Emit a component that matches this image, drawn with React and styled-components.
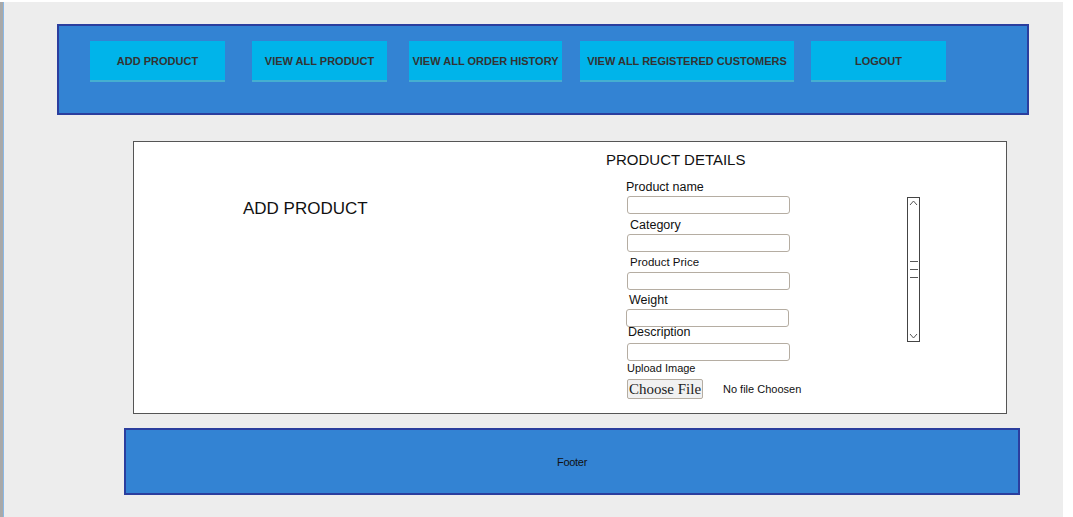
import React from 'react';
import styled, { createGlobalStyle } from 'styled-components';

const GlobalStyle = createGlobalStyle`
  html, body {
    margin: 0;
    padding: 0;
    background: #ffffff;
    font-family: "Liberation Sans", Arial, sans-serif;
  }
`;

const Canvas = styled.div`
  width: 1060px;
  height: 515px;
  margin-top: 2px;
  background: #ededed;
  border-left: 3px solid #a9a9a9;
  box-shadow: inset 1px 0 0 #8ab8e6;
  display: flex;
  flex-direction: column;
  align-items: flex-start;
`;

const Header = styled.header`
  box-sizing: border-box;
  width: 972px;
  height: 91px;
  margin: 22px 0 0 54px;
  background: #3383d3;
  border: 2px solid #2b3e9e;
  padding: 15px 0 0 31px;
  display: flex;
  align-items: flex-start;
`;

const NavButton = styled.button`
  box-sizing: border-box;
  width: ${p => p.$width}px;
  height: 41px;
  margin-left: ${p => p.$offset || 0}px;
  padding: 1px 0 0;
  background: #00b4ea;
  border: none;
  border-bottom: 2px solid #45afd0;
  color: #333;
  font-family: "Liberation Sans", Arial, sans-serif;
  font-weight: 700;
  font-size: 11px;
  white-space: nowrap;
  cursor: pointer;
`;

const Card = styled.main`
  box-sizing: border-box;
  width: 874px;
  height: 273px;
  margin: 26px 0 0 130px;
  background: #fff;
  border: 1px solid #555;
  display: flex;
`;

const LeftCol = styled.section`
  width: 472px;
  padding: 57px 0 0 109px;
  box-sizing: border-box;
`;

const Title = styled.h1`
  margin: 0;
  font-size: 17px;
  font-weight: 400;
  color: #111;
  line-height: 20px;
`;

const FormCol = styled.form`
  width: 301px;
  padding-top: 9px;
  box-sizing: border-box;
  display: flex;
  flex-direction: column;
  align-items: flex-start;
`;

const Heading = styled.h2`
  margin: 0;
  font-size: 15px;
  font-weight: 400;
  color: #111;
  line-height: 18px;
`;

const Field = styled.div`
  display: flex;
  flex-direction: column;
  align-items: flex-start;
  margin-top: ${p => p.$top}px;
`;

const Label = styled.label`
  margin-left: ${p => p.$indent}px;
  font-size: ${p => p.$size || 12.5}px;
  line-height: 15px;
  color: #111;
`;

const Input = styled.input`
  box-sizing: border-box;
  width: 163px;
  height: 18px;
  margin: ${p => p.$gap}px 0 0 ${p => p.$indent || 21}px;
  border: 1px solid #b5ada2;
  border-radius: 3px;
  background: #fff;
  outline: none;
`;

const FileRow = styled.div`
  display: flex;
  align-items: center;
  margin: 3px 0 0 21px;
`;

const FileButton = styled.button`
  box-sizing: border-box;
  width: 76px;
  height: 20px;
  padding: 0;
  background: #f1f1f1;
  border: 1px solid #b5ada2;
  border-radius: 2px;
  font-family: "Liberation Serif", "Times New Roman", serif;
  font-size: 15px;
  color: #222;
`;

const FileNote = styled.span`
  margin-left: 20px;
  font-size: 11px;
  color: #111;
`;

const Scroll = styled.div`
  box-sizing: border-box;
  width: 13px;
  height: 145px;
  margin-top: 55px;
  border: 1px solid #444;
  background: #fff;
  display: flex;
  flex-direction: column;
  justify-content: space-between;
  align-items: center;
  padding: 2px 0;
`;

const Grip = styled.div`
  display: flex;
  flex-direction: column;
  gap: 7px;
  span {
    display: block;
    width: 8px;
    height: 1px;
    background: #555;
  }
`;

const Footer = styled.footer`
  box-sizing: border-box;
  width: 896px;
  height: 67px;
  margin: 14px 0 0 121px;
  background: #3383d3;
  border: 2px solid #2b3e9e;
  display: flex;
  align-items: center;
  justify-content: center;
  font-size: 11px;
  color: #111;
  letter-spacing: -0.3px;
`;

const Chevron = ({ up }) => (
  <svg width="9" height="6" viewBox="0 0 9 6">
    <path d={up ? 'M1 5 L4.5 1 L8 5' : 'M1 1 L4.5 5 L8 1'} fill="none" stroke="#555" strokeWidth="1" />
  </svg>
);

const navItems = [
  { label: 'ADD PRODUCT', width: 135, offset: 0 },
  { label: 'VIEW ALL PRODUCT', width: 135, offset: 27 },
  { label: 'VIEW ALL ORDER HISTORY', width: 153, offset: 22 },
  { label: 'VIEW ALL REGISTERED CUSTOMERS', width: 214, offset: 18 },
  { label: 'LOGOUT', width: 135, offset: 17 },
];

const fields = [
  { label: 'Product name', top: 11, indent: 20, gap: 1, inputIndent: 21 },
  { label: 'Category', top: 4, indent: 24, gap: 1, inputIndent: 21 },
  { label: 'Product Price', top: 3, indent: 24, size: 11.5, gap: 2, inputIndent: 21 },
  { label: 'Weight', top: 3, indent: 23, gap: 1, inputIndent: 20 },
  { label: 'Description', top: -2, indent: 22, gap: 3, inputIndent: 21 },
];

export default function App() {
  return (
    <>
      <GlobalStyle />
      <Canvas>
        <Header>
          {navItems.map(item => (
            <NavButton key={item.label} $width={item.width} $offset={item.offset}>
              {item.label}
            </NavButton>
          ))}
        </Header>

        <Card>
          <LeftCol>
            <Title>ADD PRODUCT</Title>
          </LeftCol>
          <FormCol>
            <Heading>PRODUCT DETAILS</Heading>
            {fields.map(f => (
              <Field key={f.label} $top={f.top}>
                <Label $indent={f.indent} $size={f.size}>{f.label}</Label>
                <Input $gap={f.gap} $indent={f.inputIndent} />
              </Field>
            ))}
            <Field $top={0}>
              <Label $indent={21} $size={11}>Upload Image</Label>
            </Field>
            <FileRow>
              <FileButton type="button">Choose File</FileButton>
              <FileNote>No file Choosen</FileNote>
            </FileRow>
          </FormCol>
          <Scroll>
            <Chevron up />
            <Grip><span /><span /><span /></Grip>
            <Chevron />
          </Scroll>
        </Card>

        <Footer>Footer</Footer>
      </Canvas>
    </>
  );
}
